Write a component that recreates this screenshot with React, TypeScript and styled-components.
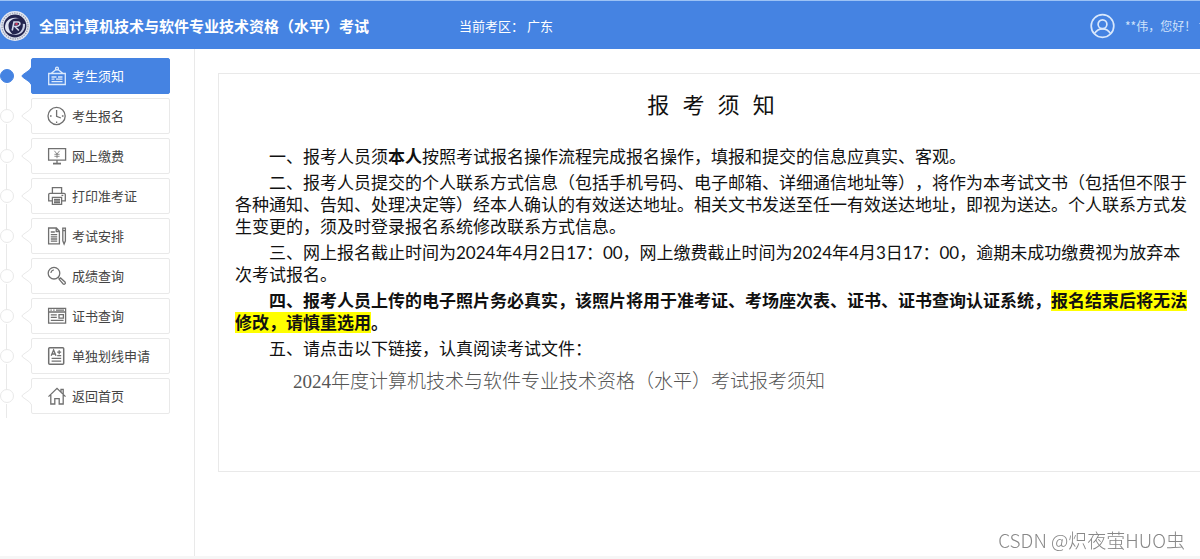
import React from "react";
import styled, { createGlobalStyle } from "styled-components";

const BLUE = "#4583e2";
const LINE = "#e9e9e9";

const GlobalStyle = createGlobalStyle`
  *, *::before, *::after { box-sizing: border-box; }
  body {
    margin: 0;
    background: #fff;
    color: #111;
    font-family: "Noto Sans CJK SC", "Noto Sans", sans-serif;
    text-spacing-trim: space-all;
  }
`;

const Page = styled.div`
  display: flex;
  flex-direction: column;
  min-height: 100vh;
  overflow-x: hidden;
`;

const Header = styled.header`
  display: flex;
  align-items: center;
  height: 49px;
  padding-top: 2px;
  border-top: 1px solid #9cc2f5;
  background: ${BLUE};
  color: #fff;
  white-space: nowrap;
  overflow: hidden;
`;

const Brand = styled.h1`
  margin: 0 0 0 8px;
  font-size: 15px;
  line-height: 24px;
  font-weight: 700;
`;

const Region = styled.p`
  margin: 0 0 0 90px;
  font-size: 13px;
  line-height: 24px;
`;

const Account = styled.button`
  display: flex;
  align-items: center;
  gap: 10px;
  margin: 0 -8px 0 auto;
  padding: 0;
  border: 0;
  background: none;
  color: #cfe2fb;
  font: inherit;
  font-size: 12px;
  line-height: 24px;
`;

const AccountName = styled.span`
  width: 64px;
  text-align: left;
`;

const Body = styled.div`
  display: flex;
  flex: 1;
`;

const Sidebar = styled.nav`
  flex: none;
  width: 195px;
  padding-top: 9px;
  border-right: 1px solid ${LINE};
`;

const NavList = styled.ul`
  display: flex;
  flex-direction: column;
  margin: 0;
  padding: 0;
  list-style: none;
`;

const NavRow = styled.li`
  display: flex;
  align-items: center;
  height: 40px;
  padding-bottom: 4px;
`;

const Marker = styled.svg`
  flex: none;
  width: 32px;
  height: 40px;
  margin: 0 -1px -4px 0;
  z-index: 1;
`;

const NavLink = styled.a<{ $active?: boolean }>`
  display: flex;
  align-items: center;
  gap: 5px;
  width: 139px;
  height: 36px;
  padding-left: 15px;
  border: 1px solid ${(p) => (p.$active ? BLUE : LINE)};
  border-radius: 2px;
  background: ${(p) => (p.$active ? BLUE : "#fff")};
  color: ${(p) => (p.$active ? "#fff" : "#444")};
  font-size: 13px;
  line-height: 20px;
  text-decoration: none;
`;

const NavIcon = styled.svg<{ $active?: boolean }>`
  flex: none;
  width: 20px;
  height: 20px;
  fill: none;
  stroke: ${(p) => (p.$active ? "#dceafc" : "#707070")};
  stroke-width: 1.3;
`;

const Main = styled.main`
  flex: 1;
  min-width: 0;
  padding: 24px 0 24px 23px;
`;

const Panel = styled.article`
  padding: 18px 13px 77px 16px;
  border: 1px solid ${LINE};
  border-right: 0;
`;

const Title = styled.h2`
  margin: 0 0 22px;
  font-family: "Liberation Mono", "Noto Sans CJK SC", monospace;
  font-size: 22px;
  line-height: 32px;
  font-weight: 400;
  text-align: center;
`;

const Notice = styled.div`
  display: flex;
  flex-direction: column;
  gap: 4px;
`;

const Paragraph = styled.p<{ $strong?: boolean }>`
  margin: 0;
  font-family: Lato, "Noto Sans CJK SC", sans-serif;
  font-size: 17px;
  line-height: 22px;
  font-weight: ${(p) => (p.$strong ? 700 : 400)};
  text-indent: 2em;
`;

const Highlight = styled.mark`
  color: inherit;
  background: #ff0;
`;

const FileLink = styled.a`
  align-self: flex-start;
  margin: 6px 0 0 58px;
  color: #555;
  font-family: "Liberation Serif", "Noto Sans CJK SC", serif;
  font-size: 19px;
  line-height: 24px;
  font-weight: 300;
  text-decoration: none;
`;

const BottomBar = styled.footer`
  height: 3px;
  background: #f6f6f6;
`;

const Watermark = styled.div`
  position: fixed;
  right: 15px;
  bottom: 5px;
  color: #888;
  font-family: "Noto Sans CJK SC", sans-serif;
  font-size: 19px;
  line-height: 28px;
  font-weight: 300;
`;

const icons: Record<string, React.ReactNode> = {
  board: (
    <>
      <path d="M1.7 7.5h16.6v11H1.7z M4 7.5 9 3.4M16 7.5 11 3.4M4.5 11h5M11 11h4.5M4.5 13.2h3M9 13.2h6.5M4.5 15.6h11" />
      <circle cx="10" cy="2.6" r="1.4" />
    </>
  ),
  clock: (
    <>
      <circle cx="9.6" cy="10" r="8.6" />
      <path d="M9.6 4v6.4l4.3 1.6M9.6 15.5v1.6M3 10h1.6M14.9 10h1.6" />
    </>
  ),
  pay: (
    <>
      <path d="M1.6 2.6h17v11.6h-17z M10 14.2v3.2" />
      <path d="M6 17.6h8" strokeWidth="1.8" />
      <path d="M7.4 4.8 10 8l2.6-3.2M10 8v4.2M7.4 8.3h5.2M7.4 10.3h5.2" strokeWidth="0.8" />
    </>
  ),
  printer: (
    <>
      <path d="M5.4 7.4V1.6h9.2v5.8M5.4 14.8H1.7V8.6q0-1.2 1.2-1.2h14.2q1.2 0 1.2 1.2v6.2h-3.7M5.4 11.4h9.2v7H5.4z M7 13.4h6M7 15h6M7 16.6h6" />
      <path d="M14.5 9.4h1.8" />
    </>
  ),
  plan: (
    <>
      <path d="M1.6 2h7.8l3 3.2v12.6H1.6z M9.2 2v3.5h3.2M3.8 6h4M3.8 8.6h6.4M3.8 10.8h6.4M3.8 13h6.4M3.8 15.2h6.4" />
      <path d="M15.8 4.6h2.6v10.2l-1.3 3.2-1.3-3.2z M15.8 4.6V2.2h2.6v2.4" />
    </>
  ),
  search: (
    <>
      <circle cx="7" cy="7.2" r="5.8" />
      <path d="M3.8 6.8q.5-2.5 3-3M11.2 11.4l1.2 1.2M12.2 13.4l1.4-1.4 4.6 4.2q.6 1.2-.4 1.8-.8.6-1.6 0z" />
    </>
  ),
  certificate: (
    <path d="M1.6 2.4h17v14.8h-17z M1.6 6h17M3.4 4.2h1.4M6.2 4.2h1.4M9 4.2h8M3.8 8.8h6M3.8 11.4h6M3.8 14.4h12.8M12 8.6h4.4v3.6H12z" />
  ),
  score: (
    <>
      <rect x="1.7" y="1.8" width="15" height="16.4" rx="1" strokeWidth="1.5" />
      <path d="M4.2 9.8 6.6 4l2.4 5.8M5 8h3.2M10.2 6.2h4M12.2 4.2v4M10.2 9.6h4M4.6 12.4h9.6M4.6 15.2h9.6" />
    </>
  ),
  home: (
    <path d="M1.5 10.6 10 2.4l8.5 8.2M3.8 9v9h4v-5.4h4.4V18h4V9M14 6V3.4h2.2v4.8" />
  ),
};

const items = [
  { label: "考生须知", icon: "board", active: true },
  { label: "考生报名", icon: "clock" },
  { label: "网上缴费", icon: "pay" },
  { label: "打印准考证", icon: "printer" },
  { label: "考试安排", icon: "plan" },
  { label: "成绩查询", icon: "search" },
  { label: "证书查询", icon: "certificate" },
  { label: "单独划线申请", icon: "score" },
  { label: "返回首页", icon: "home" },
];

function Logo() {
  return (
    <svg width="31" height="32" viewBox="0 0 31 32" aria-hidden="true">
      <circle cx="15" cy="16" r="15" fill="#e4e8f2" />
      <circle cx="15" cy="16" r="13" fill="none" stroke="#9ea3b8" strokeWidth="1.4" strokeDasharray="1.4 1" />
      <circle cx="15" cy="16" r="11.4" fill="#23244f" />
      <path d="M5 17.500C5 10 11.500 5.800 20.500 8.600c-7.500-1.200-12 2.200-12 7.400 0 3.600 1.800 6.300 4.300 8.400-4.600-.9-7.600-3.300-7.800-6.900z" fill="#dfe4f3" />
      <path d="M25 14c.6 7.400-5 12-13 10.700 7-.3 11.500-4.300 10.800-11z" fill="#c9cfe6" />
      <path d="M12.200 20.500 14 12h4.200q2.600.6 1.300 2.800-1 1.600-4.600 1.700l4 4" fill="none" stroke="#d5d9ec" strokeWidth="1.600" />
      <circle cx="16.500" cy="14" r="1.300" fill="#d13b5c" />
    </svg>
  );
}

function TimelineMarker({ active, first }: { active?: boolean; first: boolean }) {
  return (
    <Marker viewBox="0 0 32 40" aria-hidden="true">
      <path d={first ? "M6.500 26v14" : "M6.500 0v12M6.500 26v14"} stroke={LINE} fill="none" />
      <circle cx="7" cy="18" r="6.500" fill={active ? BLUE : "#fff"} stroke={active ? BLUE : LINE} />
      <path
        d="M32 8.500 29.500 12 22.500 17q-1 1 0 2l7 5 2.500 3.500"
        fill={active ? BLUE : "#fff"}
        stroke={active ? BLUE : LINE}
      />
    </Marker>
  );
}

export default function App() {
  return (
    <Page>
      <GlobalStyle />
      <Header>
        <Logo />
        <Brand>全国计算机技术与软件专业技术资格（水平）考试</Brand>
        <Region>当前考区： 广东</Region>
        <Account type="button">
          <svg width="25" height="26" viewBox="0 0 25 26" fill="none" stroke="#d9e8fc" strokeWidth="1.700" aria-hidden="true">
            <circle cx="12.500" cy="13" r="11.300" />
            <circle cx="12.500" cy="11.200" r="4.400" />
            <path d="M4.400 20.600q3-4.800 8.100-4.800t8.100 4.800" />
          </svg>
          <AccountName>**伟，您好！</AccountName>
          <svg width="9" height="6" viewBox="0 0 9 6" fill="#d9e8fc" aria-hidden="true">
            <path d="M0 0h9L4.500 5z" />
          </svg>
        </Account>
      </Header>
      <Body>
        <Sidebar aria-label="考生菜单">
          <NavList>
            {items.map((item, i) => (
              <NavRow key={item.label}>
                <TimelineMarker active={item.active} first={i === 0} />
                <NavLink href="#" $active={item.active} aria-current={item.active ? "page" : undefined}>
                  <NavIcon viewBox="0 0 20 20" $active={item.active} aria-hidden="true">
                    {icons[item.icon]}
                  </NavIcon>
                  {item.label}
                </NavLink>
              </NavRow>
            ))}
          </NavList>
        </Sidebar>
        <Main>
          <Panel>
            <Title>报 考 须 知</Title>
            <Notice>
              <Paragraph>
                一、报考人员须<b>本人</b>按照考试报名操作流程完成报名操作，填报和提交的信息应真实、客观。
              </Paragraph>
              <Paragraph>
                二、报考人员提交的个人联系方式信息（包括手机号码、电子邮箱、详细通信地址等），将作为本考试文书（包括但不限于各种通知、告知、处理决定等）经本人确认的有效送达地址。相关文书发送至任一有效送达地址，即视为送达。个人联系方式发生变更的，须及时登录报名系统修改联系方式信息。
              </Paragraph>
              <Paragraph>
                三、网上报名截止时间为2024年4月2日17：00，网上缴费截止时间为2024年4月3日17：00，逾期未成功缴费视为放弃本次考试报名。
              </Paragraph>
              <Paragraph $strong>
                四、报考人员上传的电子照片务必真实，该照片将用于准考证、考场座次表、证书、证书查询认证系统，
                <Highlight>报名结束后将无法修改，请慎重选用</Highlight>。
              </Paragraph>
              <Paragraph>五、请点击以下链接，认真阅读考试文件：</Paragraph>
              <FileLink href="#">2024年度计算机技术与软件专业技术资格（水平）考试报考须知</FileLink>
            </Notice>
          </Panel>
        </Main>
      </Body>
      <BottomBar />
      <Watermark>CSDN @炽夜萤HUO虫</Watermark>
    </Page>
  );
}
